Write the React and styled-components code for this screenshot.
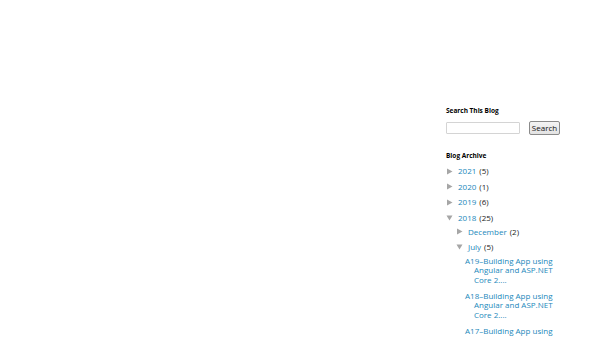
import React from 'react';
import styled, { createGlobalStyle } from 'styled-components';

const GlobalStyle = createGlobalStyle`
  html, body {
    margin: 0;
    padding: 0;
    background: #ffffff;
  }
  body {
    font-family: "Open Sans", "Noto Sans", sans-serif;
  }
`;

const ARCHIVE = [
  { label: '2021', count: 5 },
  { label: '2020', count: 1 },
  { label: '2019', count: 6 },
  {
    label: '2018',
    count: 25,
    open: true,
    children: [
      { label: 'December', count: 2 },
      {
        label: 'July',
        count: 5,
        open: true,
        posts: [
          'A19–Building App using Angular and ASP.NET Core 2....',
          'A18–Building App using Angular and ASP.NET Core 2....',
          'A17–Building App using Angular and ASP.NET Core 2....',
        ],
      },
    ],
  },
];

const Arrow = ({ open }) => (
  <Toggle>
    <svg width="7" height="7" viewBox="0 0 7 7">
      {open ? (
        <path d="M0.5 1.5 L6.5 1.5 L3.5 6.5 Z" fill="#a6a6a6" />
      ) : (
        <path d="M1 0.5 L6.5 3.5 L1 6.5 Z" fill="#a6a6a6" />
      )}
    </svg>
  </Toggle>
);

const App = () => {
  return (
    <>
      <GlobalStyle />
      <Page>
        <Main />
        <Sidebar>
          <Widget>
            <Title>Search This Blog</Title>
            <SearchRow>
              <SearchInput type="text" />
              <SearchButton type="button">Search</SearchButton>
            </SearchRow>
          </Widget>
          <Widget>
            <Title>Blog Archive</Title>
            <Tree>
              {ARCHIVE.map((year) => (
                <Node key={year.label}>
                  <Row>
                    <Arrow open={year.open} />
                    <NodeLink href="#">{year.label}</NodeLink>
                    <Count>({year.count})</Count>
                  </Row>
                  {year.children && (
                    <SubTree>
                      {year.children.map((month) => (
                        <Node key={month.label} $sub>
                          <Row>
                            <Arrow open={month.open} />
                            <NodeLink href="#">{month.label}</NodeLink>
                            <Count>({month.count})</Count>
                          </Row>
                          {month.posts && (
                            <Posts>
                              {month.posts.map((post, i) => (
                                <Post key={i}>
                                  <NodeLink href="#">{post}</NodeLink>
                                </Post>
                              ))}
                            </Posts>
                          )}
                        </Node>
                      ))}
                    </SubTree>
                  )}
                </Node>
              ))}
            </Tree>
          </Widget>
        </Sidebar>
      </Page>
    </>
  );
};

const Page = styled.div`
  display: flex;
  height: 338px;
  overflow: hidden;
`;

const Main = styled.div`
  width: 446px;
  flex-shrink: 0;
`;

const Sidebar = styled.aside`
  width: 124px;
  padding-top: 107px;
`;

const Widget = styled.div`
  margin-bottom: 17px;
`;

const Title = styled.h2`
  margin: 0 0 6px;
  font-size: 6.5px;
  line-height: 8px;
  font-weight: 700;
  color: #000000;
`;

const SearchRow = styled.div`
  display: flex;
  align-items: center;
  gap: 9px;
`;

const SearchInput = styled.input`
  box-sizing: border-box;
  width: 74px;
  height: 12px;
  margin: 0;
  padding: 0 2px;
  border: 1px solid #d4d4d4;
  border-radius: 1px;
  background: #ffffff;
`;

const SearchButton = styled.button`
  box-sizing: border-box;
  height: 14px;
  width: 31px;
  margin: 0;
  padding: 0;
  font-family: "Open Sans", "Noto Sans", sans-serif;
  font-size: 8px;
  line-height: 12px;
  color: #111111;
  background: linear-gradient(#f4f4f4, #e2e2e2);
  border: 1px solid #8a8a8a;
  border-radius: 2px;
`;

const Tree = styled.ul`
  list-style: none;
  margin: 0;
  padding: 0;
  font-size: 8px;
  line-height: 10px;
  color: #222222;
`;

const SubTree = styled.ul`
  list-style: none;
  margin: 4px 0 0;
  padding: 0 0 0 10px;
`;

const Node = styled.li`
  margin: 0 0 ${(p) => (p.$sub ? '5px' : '5.5px')};
`;

const Row = styled.div`
  display: flex;
  align-items: center;
  height: 10px;
  white-space: nowrap;
`;

const Toggle = styled.span`
  display: flex;
  align-items: center;
  width: 12px;
  flex-shrink: 0;
`;

const NodeLink = styled.a`
  color: #2288bb;
  text-decoration: none;
`;

const Count = styled.span`
  margin-left: 3px;
`;

const Posts = styled.ul`
  list-style: none;
  margin: 4px 0 0;
  padding: 0 0 0 9px;
`;

const Post = styled.li`
  width: 90px;
  padding-left: 9px;
  text-indent: -9px;
  line-height: 9.7px;
  margin-bottom: 6px;
`;

export default App;
